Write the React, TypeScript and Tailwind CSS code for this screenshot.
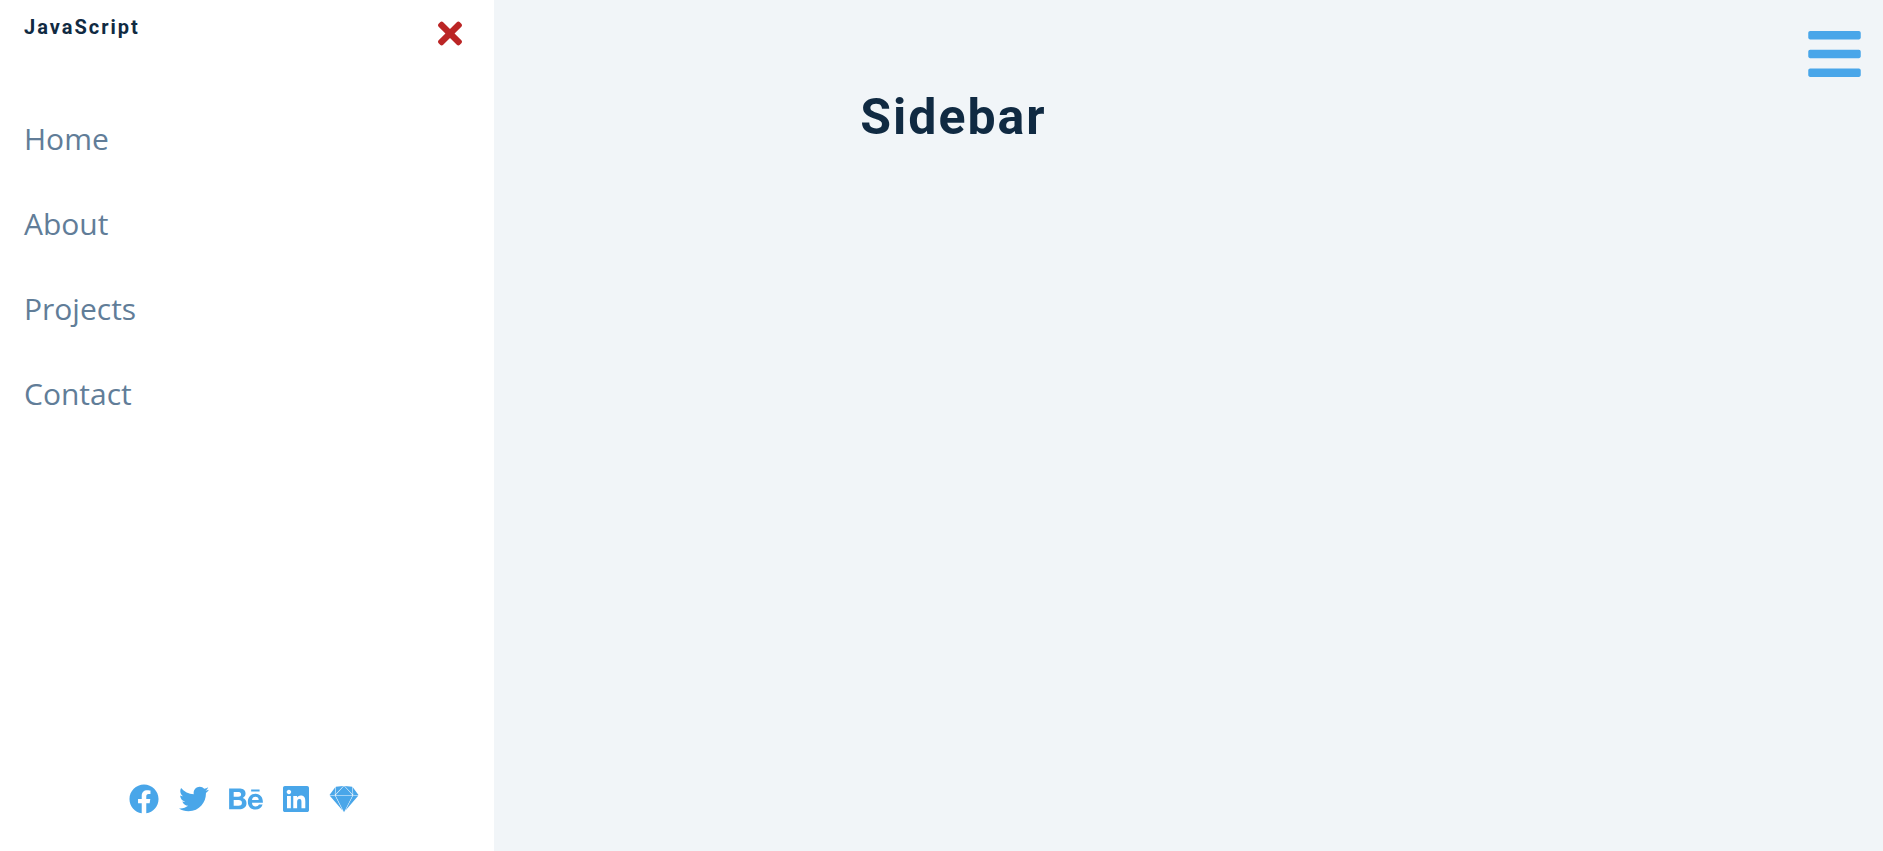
import { FaBars, FaFacebook, FaTwitter, FaBehance, FaLinkedin, FaSketch, FaTimes } from 'react-icons/fa';

const links = ['Home', 'About', 'Projects', 'Contact'];
const social = [
  { name: 'Facebook', Icon: FaFacebook, size: 'h-[30px] w-[30px]' },
  { name: 'Twitter', Icon: FaTwitter, size: 'h-[30px] w-[30px]' },
  { name: 'Behance', Icon: FaBehance, size: 'h-[30px] w-[34px]' },
  { name: 'LinkedIn', Icon: FaLinkedin, size: 'h-[30px] w-[26px]' },
  { name: 'Sketch', Icon: FaSketch, size: 'h-[30px] w-[30px]' },
];

export default function App() {
  return (
    <div className="grid min-h-screen grid-cols-1 bg-[#f1f5f8] font-['Open_Sans',sans-serif]">
      <aside className="z-10 col-start-1 row-start-1 flex w-full max-w-[494px] flex-col bg-white">
        <div className="flex items-start justify-between pt-4 pr-8 pl-6">
          <h2 className="font-[Roboto,sans-serif] text-xl leading-[22px] font-bold tracking-[2px] text-[#102a42]">JavaScript</h2>
          <button type="button" aria-label="Close sidebar" className="cursor-pointer text-[#bb2525]">
            <FaTimes className="h-[35px] w-6" />
          </button>
        </div>
        <nav className="mt-[45px] flex-1">
          <ul>
            {links.map((link) => (
              <li key={link}>
                <a href="#" className="block px-6 py-5 text-[30px] leading-[45px] text-[#617d98]">{link}</a>
              </li>
            ))}
          </ul>
        </nav>
        <ul className="flex justify-center gap-5 pr-1.5 pb-[37px] text-[#49a6e9]">
          {social.map(({ name, Icon, size }) => (
            <li key={name}>
              <a href="#" aria-label={name} className="block">
                <Icon className={size} />
              </a>
            </li>
          ))}
        </ul>
      </aside>
      <main className="col-start-1 row-start-1 grid grid-cols-[1fr_auto_1fr] items-start pt-6">
        <h1 className="col-start-2 pt-16 pl-6 font-[Roboto,sans-serif] text-[50px] leading-[58px] font-bold tracking-[2px] text-[#102a42]">Sidebar</h1>
        <button type="button" aria-label="Open sidebar" className="mr-[22px] cursor-pointer justify-self-end text-[#49a6e9]">
          <FaBars className="h-[60px] w-[53px]" />
        </button>
      </main>
    </div>
  );
}
